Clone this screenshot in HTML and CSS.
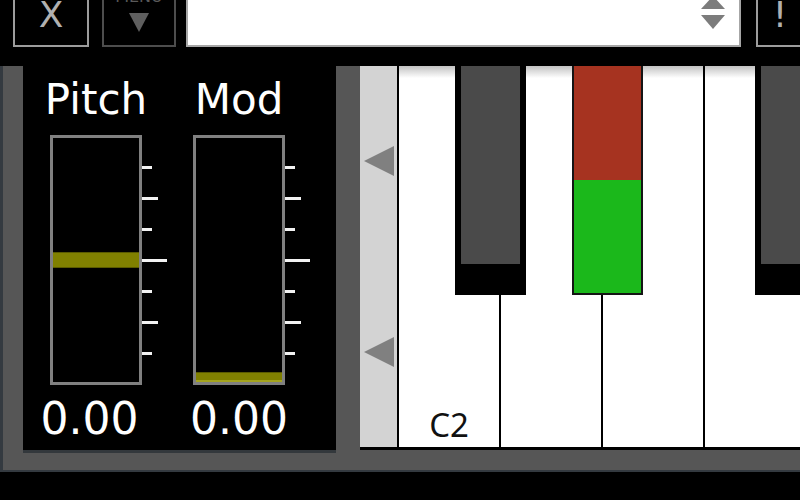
FILE: index.html
```html
<!DOCTYPE html>
<html lang="en">

<head>
    <meta charset="UTF-8">
    <meta name="viewport" content="width=device-width, initial-scale=1.0">
    <title>Keyboard</title>
    <link rel="stylesheet" href="styles.css">
</head>

<body>

    <div class="topbar">
        <div class="btn btn-close"><span class="glyph">X</span></div>
        <div class="btn btn-menu">
            <span class="menu-text">MENU</span>
            <svg width="20" height="19" viewBox="0 0 20 19"><polygon points="0,0 20,0 10,19" fill="#5f5f5f"/></svg>
        </div>
        <div class="preset-field">
            <svg width="24" height="33" viewBox="0 0 24 33">
                <polygon points="12,0 24,13 0,13" fill="#7c7c7c"/>
                <polygon points="0,19 24,19 12,33" fill="#7c7c7c"/>
            </svg>
        </div>
        <div class="btn btn-alert"><span class="glyph">!</span></div>
    </div>

    <div class="main">
        <div class="wheels">
            <div class="wheel pitch">
                <div class="wheel-label">Pitch</div>
                <div class="wheel-row">
                    <div class="spacer"></div>
                    <div class="track"><div class="thumb"></div></div>
                    <div class="ticks">
                        <div class="tick"></div>
                        <div class="tick mid"></div>
                        <div class="tick"></div>
                        <div class="tick long"></div>
                        <div class="tick"></div>
                        <div class="tick mid"></div>
                        <div class="tick"></div>
                    </div>
                </div>
                <div class="wheel-value">0.00</div>
            </div>
            <div class="wheel mod">
                <div class="wheel-label">Mod</div>
                <div class="wheel-row">
                    <div class="spacer"></div>
                    <div class="track"><div class="thumb"></div></div>
                    <div class="ticks">
                        <div class="tick"></div>
                        <div class="tick mid"></div>
                        <div class="tick"></div>
                        <div class="tick long"></div>
                        <div class="tick"></div>
                        <div class="tick mid"></div>
                        <div class="tick"></div>
                    </div>
                </div>
                <div class="wheel-value">0.00</div>
            </div>
        </div>

        <div class="keyboard">
            <div class="scroll-strip">
                <div class="scroll-btn">
                    <svg width="30" height="30" viewBox="0 0 30 30"><polygon points="0,15 30,0 30,30" fill="#808080"/></svg>
                </div>
                <div class="scroll-btn">
                    <svg width="30" height="30" viewBox="0 0 30 30"><polygon points="0,15 30,0 30,30" fill="#808080"/></svg>
                </div>
            </div>
            <div class="keys">
                <div class="white-key"><span class="key-label">C2</span></div>
                <div class="white-key"></div>
                <div class="white-key"></div>
                <div class="white-key"></div>
                <div class="black-key c-sharp"></div>
                <div class="black-key d-sharp pressed"></div>
                <div class="black-key f-sharp"></div>
            </div>
        </div>
    </div>

</body>

</html>
```

FILE: styles.css
```css
* {
    box-sizing: border-box;
}

body {
    margin: 0;
    padding: 0;
    background-color: #000;
    font-family: 'DejaVu Sans', sans-serif;
    overflow: hidden;
}

/* top bar, scrolled partly out of view */

.topbar {
    height: 66px;
    display: flex;
    align-items: flex-end;
    padding: 0 0 19px 13px;
    overflow: hidden;
}

.btn {
    flex-shrink: 0;
    height: 90px;
    border: 2px solid #9c9c9c;
    display: flex;
    flex-direction: column;
    align-items: center;
    justify-content: flex-end;
}

.glyph {
    color: #b0b0b0;
    font-size: 36px;
    line-height: 1;
    margin-bottom: 12px;
}

.btn-close {
    width: 76px;
}

.btn-menu {
    width: 74px;
    margin-left: 13px;
    border-color: #4d4d4d;
    padding-bottom: 13px;
}

.menu-text {
    color: #5a5a5a;
    font-size: 16px;
    line-height: 1;
    margin-bottom: 8px;
}

.preset-field {
    flex-shrink: 0;
    width: 555px;
    height: 90px;
    margin-left: 10px;
    background-color: #fff;
    border: 2px solid #a6a6a6;
    display: flex;
    justify-content: flex-end;
    align-items: flex-end;
    padding: 0 14px 16px 0;
}

.btn-alert {
    width: 48px;
    margin-left: 15px;
}

/* main area */

.main {
    height: 406px;
    display: flex;
    align-items: flex-start;
    background-color: #565656;
    border-left: 3px solid #343a40;
    border-bottom: 2px solid #343a40;
}

.wheels {
    flex-shrink: 0;
    width: 313px;
    height: 387px;
    margin-left: 20px;
    background-color: #000;
    border-bottom: 3px solid #33383c;
    display: flex;
    gap: 1px;
    padding: 13px 0 0 2px;
}

.wheel {
    width: 142px;
    display: flex;
    flex-direction: column;
    align-items: center;
    color: #fff;
}

.wheel-label {
    font-size: 42px;
    line-height: 1;
}

.wheel-row {
    display: flex;
    margin-top: 14px;
}

.spacer {
    width: 25px;
}

.track {
    width: 92px;
    height: 250px;
    border: 3px solid #808080;
    background-color: #000;
    display: flex;
    flex-direction: column;
    justify-content: center;
}

.mod .track {
    justify-content: flex-end;
}

.thumb {
    height: 16px;
    background-color: #808000;
    border-top: 1px solid #5a5a00;
    border-bottom: 1px solid #5a5a00;
}

.mod .thumb {
    height: 10px;
    border-bottom: 2px solid #a4a41e;
}

.ticks {
    width: 25px;
    height: 189px;
    margin-top: 31px;
    display: flex;
    flex-direction: column;
    justify-content: space-between;
}

.tick {
    width: 10px;
    height: 3px;
    background-color: #f2f2f2;
}

.tick.mid {
    width: 16px;
}

.tick.long {
    width: 25px;
}

.wheel-value {
    font-size: 44px;
    line-height: 1;
    margin-top: 12px;
}

.pitch .wheel-value {
    margin-right: 13px;
}

/* keyboard */

.keyboard {
    flex: 1;
    min-width: 0;
    height: 384px;
    margin-left: 24px;
    display: flex;
    border-bottom: 3px solid #000;
}

.scroll-strip {
    flex-shrink: 0;
    width: 37px;
    background-color: #d3d3d3;
    display: flex;
    flex-direction: column;
}

.scroll-btn {
    flex: 1;
    display: flex;
    align-items: center;
    justify-content: center;
}

.keys {
    flex: 1;
    min-width: 0;
    position: relative;
    display: flex;
    overflow: hidden;
    border-left: 2px solid #000;
}

.white-key {
    flex: 0 0 102px;
    border-right: 2px solid #000;
    background: linear-gradient(#c2c2c2, #fff 12px);
    display: flex;
    align-items: flex-end;
    justify-content: center;
}

.key-label {
    font-family: 'Noto Sans', sans-serif;
    font-size: 33px;
    line-height: 1;
    color: #111;
    margin-bottom: 6px;
}

.black-key {
    position: absolute;
    top: 0;
    width: 71px;
    height: 229px;
    background-color: #4a4a4a;
    border: solid #000;
    border-width: 0 6px 31px 6px;
}

.c-sharp {
    left: 56px;
}

.d-sharp {
    left: 173px;
}

.f-sharp {
    left: 356px;
}

.black-key.pressed {
    background: linear-gradient(#a63320 0, #a63320 50%, #1bb81b 50%, #1bb81b 100%);
    border: 2px solid #151515;
    border-top: 0;
}
```
